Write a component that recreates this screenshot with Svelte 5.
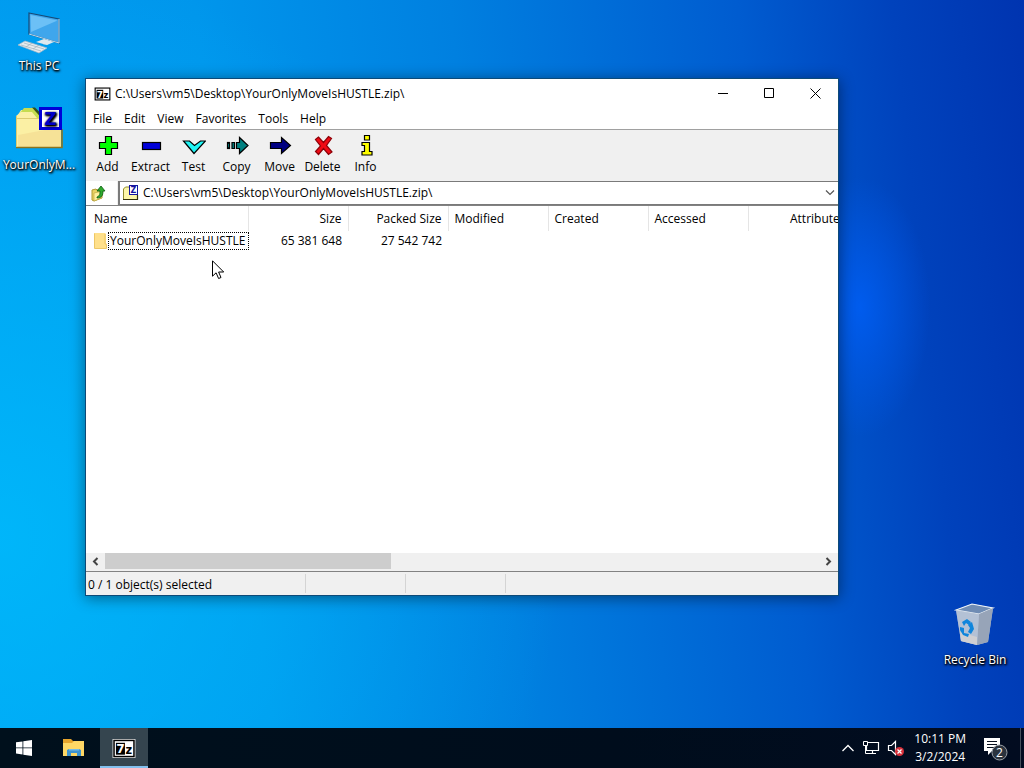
<script lang="ts">
  const path = "C:\\Users\\vm5\\Desktop\\YourOnlyMoveIsHUSTLE.zip\\"
  const menus = ["File", "Edit", "View", "Favorites", "Tools", "Help"]
  const tools = ["Add", "Extract", "Test", "Copy", "Move", "Delete", "Info"]
  const columns = [
    { name: "Name" },
    { name: "Size", number: true },
    { name: "Packed Size", number: true },
    { name: "Modified" },
    { name: "Created" },
    { name: "Accessed" },
    { name: "Attributes", number: true },
  ]
  const files = [
    { name: "YourOnlyMoveIsHUSTLE", size: "65 381 648", packed: "27 542 742" },
  ]

  let address = path
</script>

{#snippet sevenZip(width, height)}
  <svg {width} {height} viewBox="0 0 24 20" aria-hidden="true">
    <rect width="24" height="20" fill="#fff" />
    <rect x="1.5" y="1.5" width="21" height="17" fill="#fff" stroke="#000" stroke-width="1.6" />
    <rect x="3.5" y="4" width="9.5" height="12.5" fill="#000" />
    <text x="8.3" y="15" class="logo-text" font-size="13" fill="#fff">7</text>
    <text x="17" y="16" class="logo-text" font-size="12">z</text>
  </svg>
{/snippet}

{#snippet toolIcon(name)}
  <svg width="24" height="24" viewBox="0 0 24 24" stroke="#000" stroke-width="1.2" aria-hidden="true">
    {#if name === "Add"}
      <path d="M9.5 2.5h6v6h6v6h-6v6h-6v-6h-6v-6h6z" fill="#0f0" />
    {:else if name === "Extract"}
      <rect x="3.5" y="8.5" width="18" height="7" fill="#0000d8" />
    {:else if name === "Test"}
      <path d="M1.5 7h6l5 4.500 6-4.500h5L12 19.500z" fill="#20f4f4" />
    {:else if name === "Copy"}
      <rect x="2.5" y="8.5" width="2" height="6" fill="#008080" />
      <path d="M7 8.5h2.500v6H7zM11.500 8.500h3V3.500L23 11.500l-8.500 8v-5h-3z" fill="#008080" />
    {:else if name === "Move"}
      <path d="M2.500 8.500h11v-5l9 8-9 8v-5h-11z" fill="#000080" />
    {:else if name === "Delete"}
      <path d="M4.500 5.500l3-2.500 5 5.500 5-6 3 2-5 7 5.500 6.500-3.500 2.500-5-6-5 6-3-3 5-5.500z" fill="#f00a14" stroke="#8c0008" />
    {:else}
      <path d="M10.500 1.500h5v4.500h-5zM8 8.500h7.500v9H18v3.500H8V17.500h2.500v-6H8z" fill="#ff0" />
    {/if}
  </svg>
{/snippet}

<div class="screen">
  <main class="desktop">
    <button type="button" class="shortcut shortcut--pc">
      <svg width="44" height="44" viewBox="0 0 44 44" aria-hidden="true">
        <path d="M12 3l30 6v24L12 24z" fill="#3fa6ec" stroke="#164a78" stroke-width="1.200" />
        <path d="M13.500 5l27 5.500L14 22z" fill="#6cc0f6" />
        <path d="M42 9v24L12 24" fill="none" stroke="#bcdcf0" />
        <path d="M27 29.500l4 1v4h-5z" fill="#9eb3c2" />
        <path d="M19 32l8-3 10 3-7 3z" fill="#dfe8ee" />
        <path d="M1 35l7-4 22 7-8 5z" fill="#e6ebee" stroke="#a9b9c5" stroke-width=".7" />
        <path d="M4 35l20 6M7 33l20 6M9 37l6-4M16 39l6-4" stroke="#9eb0bc" stroke-width=".7" />
      </svg>
      <span>This PC</span>
    </button>
    <button type="button" class="shortcut shortcut--zip">
      <svg width="48" height="48" viewBox="0 0 48 48" aria-hidden="true">
        <path d="M1 13l5-8h14l6 7z" fill="#f6ee9a" />
        <path d="M5 8l4-5h9l6 5 4 5h-8l-4-6H8z" fill="#c6dc50" />
        <path d="M17 2.500h3l6 6v4z" fill="#35501c" />
        <path d="M1 11l5-4h11l5 6h24v29H1z" fill="#fbf0a4" />
        <path d="M3 30l43-8v20H3z" fill="#f3dc92" opacity=".7" />
        <path d="M1 42.500h46V24" fill="none" stroke="#8a7420" stroke-width="1.600" />
        <path d="M1.500 42V11M2 13.500h22" fill="none" stroke="#dccb70" />
        <rect x="25.500" y="3.500" width="20" height="20" fill="#fff" stroke="#0000d8" stroke-width="3" />
        <text x="35.500" y="19.500" class="logo-text" font-size="17" fill="#0000c8">Z</text>
      </svg>
      <span>YourOnlyM...</span>
    </button>
    <button type="button" class="shortcut shortcut--bin">
      <svg width="48" height="48" viewBox="0 0 48 48" aria-hidden="true">
        <path d="M5 10l16-6 21 4-5 34-11 3-16-4z" fill="#b9c6d8" opacity=".9" />
        <path d="M5 10l16-6 21 4-14 6z" fill="#6f8cb4" stroke="#edf3f8" stroke-width="1.200" />
        <path d="M28 14l14-6-5 34-11 3z" fill="#97a4b8" />
        <path d="M5 10l23 4-2 31-16-4z" fill="#b7c3d4" opacity=".8" />
        <path d="M9 32l17 5v8l-16-4z" fill="#cfcfd2" />
        <path d="M11 22l5-3 4 3-2 3-3-2-2 3zM21 22l2 7-3 5-3-2 2-4-2-3zM9 27l4 1v5l5 1-1 3-5-2-3-5z" fill="#0f85dc" />
      </svg>
      <span>Recycle Bin</span>
    </button>

    <section class="window" aria-label="7-Zip">
      <header class="titlebar">
        {@render sevenZip(17, 14)}
        <h1>{path}</h1>
        <button type="button" class="caption" aria-label="Minimize">
          <svg width="11" height="11" stroke="#000"><path d="M0 5.500h10" /></svg>
        </button>
        <button type="button" class="caption" aria-label="Maximize">
          <svg width="11" height="11" stroke="#000" fill="none"><path d="M.5.5h9v9h-9z" /></svg>
        </button>
        <button type="button" class="caption" aria-label="Close">
          <svg width="11" height="11" stroke="#000"><path d="M.5.5l10 10M10.500.5l-10 10" /></svg>
        </button>
      </header>

      <nav class="menubar">
        {#each menus as menu}
          <button type="button">{menu}</button>
        {/each}
      </nav>

      <div class="toolbar">
        {#each tools as tool}
          <button type="button" class="tool">
            {@render toolIcon(tool)}
            <span>{tool}</span>
          </button>
        {/each}
      </div>

      <div class="addressbar">
        <button type="button" class="up" aria-label="Up One Level">
          <svg width="15" height="17" viewBox="0 0 15 17">
            <path d="M1 5l4-1 1 1 5-1v9l-8 3-2-1z" fill="#e9d264" stroke="#b09a32" />
            <path d="M3 8l9-2-2 7-7 3z" fill="#fff0a0" stroke="#c0aa40" stroke-width=".7" />
            <path d="M6 12c3-1 3-3 3-6H6l4-5 4 5h-2c0 4-1 7-6 7z" fill="#2faa2f" stroke="#0b5c10" stroke-width=".8" />
          </svg>
        </button>
        <div class="combo">
          <svg width="17" height="17" viewBox="0 0 17 17" aria-hidden="true">
            <path d="M1 4l2-2h4l2 2h7v10H1z" fill="#fdf6a8" />
            <path d="M1.500 14V4l2-2H7" fill="none" stroke="#8f8a30" />
            <path d="M1 14.500h14.500V10" fill="none" stroke="#33300a" stroke-width="1.200" />
            <rect x="7.500" y=".500" width="8" height="9" fill="#fff" stroke="#1414a0" />
            <text x="11.500" y="8" class="logo-text" font-size="8" fill="#1414a0">Z</text>
          </svg>
          <input type="text" aria-label="Address" bind:value={address} />
          <button type="button" aria-label="Show addresses">
            <svg width="10" height="6" fill="none" stroke="#555" stroke-width="1.200"><path d="M1 .5l4 4 4-4" /></svg>
          </button>
        </div>
      </div>

      <div class="list">
        <table>
          <thead>
            <tr>
              {#each columns as column}
                <th scope="col" class:number={column.number}>{column.name}</th>
              {/each}
            </tr>
          </thead>
          <tbody>
            {#each files as file}
              <tr>
                <td>
                  <div class="file">
                    <svg width="14" height="16" viewBox="0 0 14 16" aria-hidden="true">
                      <path d="M0 0h11l1 1v9l1 1v4H0z" fill="#ffe08a" />
                      <path d="M.5.5v15h12v-4l-1.500-.5V1" fill="none" stroke="#edc766" />
                    </svg>
                    <span>{file.name}</span>
                  </div>
                </td>
                <td class="number">{file.size}</td>
                <td class="number">{file.packed}</td>
                <td></td>
                <td></td>
                <td></td>
                <td></td>
              </tr>
            {/each}
          </tbody>
        </table>
      </div>

      <div class="scrollbar">
        <button type="button" aria-label="Scroll left">
          <svg width="7" height="9" fill="none" stroke="#444" stroke-width="2"><path d="M5.500 1L2 4.500 5.500 8" /></svg>
        </button>
        <div class="track"><div class="thumb"></div></div>
        <button type="button" aria-label="Scroll right">
          <svg width="7" height="9" fill="none" stroke="#444" stroke-width="2"><path d="M1.500 1L5 4.500 1.500 8" /></svg>
        </button>
      </div>

      <footer class="status">
        <span class="status__main">0 / 1 object(s) selected</span>
        <span></span>
        <span></span>
      </footer>
    </section>

    <svg class="cursor" width="13" height="20" viewBox="0 0 13 20" aria-hidden="true">
      <path d="M.5.8v15.400l3.600-3.400 2.500 5.700 2.400-1L6.600 12h5.100z" fill="#fff" stroke="#000" />
    </svg>
  </main>

  <footer class="taskbar">
    <button type="button" class="task" aria-label="Start">
      <svg width="16" height="16" viewBox="0 0 16 16" fill="#fff">
        <path d="M0 2.300L6.500 1.400v6.100H0zM7.300 1.300L16 0v7.500H7.300zM0 8.300h6.500v6.200L0 13.600zM7.300 8.300H16V16l-8.700-1.300z" />
      </svg>
    </button>
    <button type="button" class="task" aria-label="File Explorer">
      <svg width="22" height="18" viewBox="0 0 22 18">
        <path d="M0 0h8l2 2h11v15H0z" fill="#e7a52c" />
        <path d="M0 4h9l2-2h10v15H0z" fill="#ffd865" />
        <path d="M4 17v-6l2-1h10l2 1v6h-4v-3H8v3z" fill="#3e94d0" />
        <path d="M6 10h10v1.500H6z" fill="#76bce6" />
      </svg>
    </button>
    <button type="button" class="task task--active" aria-label="7-Zip">
      {@render sevenZip(24, 19)}
    </button>

    <div class="tray">
      <button type="button" aria-label="Show hidden icons">
        <svg width="14" height="16" fill="none" stroke="#fff" stroke-width="1.300"><path d="M1.500 11L7 5.500l5.500 5.500" /></svg>
      </button>
      <button type="button" aria-label="Network">
        <svg width="18" height="16" fill="none" stroke="#fff">
          <path d="M5.500 2.500h11v8h-12V6M10.500 10.500v3M6 13.500h8" stroke-width="1.200" />
          <path d="M1.500 1.500h4v4h-4zM3.500 5.500v8h3" />
        </svg>
      </button>
      <button type="button" aria-label="Volume">
        <svg width="18" height="18" fill="none">
          <path d="M1.500 6.500h3l4-4v13l-4-4h-3z" stroke="#fff" stroke-width="1.200" />
          <circle cx="12.500" cy="12.500" r="4.500" fill="#d8313b" />
          <path d="M10.500 10.500l4 4M14.500 10.500l-4 4" stroke="#fff" stroke-width="1.200" />
        </svg>
      </button>
      <button type="button" class="clock">
        <time>10:11 PM</time>
        <time>3/2/2024</time>
      </button>
      <button type="button" class="notices" aria-label="2 new notifications">
        <svg width="26" height="26" viewBox="0 0 26 26">
          <path d="M1 3h16v13H9l-4 4v-4H1z" fill="#fff" />
          <path d="M4 6.500h10M4 9.500h10M4 12.500h7" stroke="#08111f" />
          <circle cx="16.500" cy="17.500" r="7.500" fill="#2b333e" stroke="#9a9fa6" />
          <text x="16.500" y="22" font-size="12" fill="#fff" text-anchor="middle">2</text>
        </svg>
      </button>
      <button type="button" class="peek" aria-label="Show desktop"></button>
    </div>
  </footer>
</div>

<style>
  :global(body) {
    margin: 0;
  }

  .screen {
    display: flex;
    flex-direction: column;
    height: 100vh;
    overflow: hidden;
    font: 12px/16px "Open Sans", "Noto Sans", sans-serif;
    color: #000;
    background:
      radial-gradient(ellipse 70px 130px at 84% 40%, rgba(0, 98, 255, 0.7), transparent),
      radial-gradient(ellipse 55% 75% at 0% 70%, rgba(0, 196, 255, 0.65), transparent),
      linear-gradient(84deg, #009cf0 0%, #0096ec 25%, #0080e0 48%, #005cd0 74%, #0042bc 88%, #0034b0 100%);
  }

  button,
  input {
    margin: 0;
    padding: 0;
    border: 0;
    background: none;
    font: inherit;
    color: inherit;
  }

  svg {
    display: block;
    flex: none;
  }

  .logo-text {
    font-family: "DejaVu Sans", sans-serif;
    font-weight: bold;
    text-anchor: middle;
  }

  .desktop {
    position: relative;
    flex: 1;
  }

  /* desktop icons sit freely on the canvas */
  .shortcut {
    position: absolute;
    display: flex;
    flex-direction: column;
    align-items: center;
    gap: 4px;
    width: 76px;
    color: #fff;
    text-shadow: 0 1px 2px #000, 1px 1px 2px #000, 1px 1px 3px #000;
    white-space: nowrap;
  }

  .shortcut--pc {
    left: 1px;
    top: 10px;
  }

  .shortcut--zip {
    left: 1px;
    top: 105px;
  }

  .shortcut--bin {
    right: 11px;
    bottom: 60px;
  }

  .window {
    position: absolute;
    inset: 78px 185px 132px 85px;
    display: flex;
    flex-direction: column;
    box-sizing: border-box;
    border: 1px solid #0d4a78;
    background: #fff;
    box-shadow: 0 2px 14px rgba(0, 0, 0, 0.45);
  }

  .titlebar {
    display: flex;
    align-items: center;
    height: 29px;
    padding-left: 8px;
  }

  .titlebar h1 {
    flex: 1;
    margin: 0 0 0 4px;
    font-size: 12px;
    font-weight: normal;
  }

  .caption {
    display: flex;
    align-items: center;
    justify-content: center;
    width: 46px;
    height: 100%;
  }

  .menubar {
    display: flex;
    height: 21px;
    padding-left: 1px;
    border-bottom: 1px solid #a0a0a0;
  }

  .menubar button {
    padding: 0 6px;
  }

  .toolbar {
    display: flex;
    height: 51px;
    background: #f0f0f0;
  }

  .tool {
    display: flex;
    flex-direction: column;
    align-items: center;
    gap: 1px;
    width: 43px;
    padding-top: 4px;
  }

  .addressbar {
    display: flex;
    height: 24px;
    border-bottom: 1px solid #828282;
    background: #f0f0f0;
  }

  .up {
    display: flex;
    align-items: center;
    width: 31px;
    margin-right: 1px;
    padding-left: 5px;
    background: #fff;
  }

  .combo {
    display: flex;
    flex: 1;
    align-items: center;
    padding: 0 3px 0 2px;
    border: solid #7a7a7a;
    border-width: 1px 0 1px 2px;
    background: #fff;
  }

  .combo input {
    flex: 1;
    min-width: 0;
    padding-left: 4px;
    outline: none;
  }

  .list {
    flex: 1;
    overflow: hidden;
  }

  table {
    width: 762px;
    border-collapse: collapse;
    table-layout: fixed;
  }

  th,
  td {
    box-sizing: border-box;
    width: 100px;
    height: 25px;
    padding: 0 6px;
    font-weight: normal;
    text-align: left;
    white-space: nowrap;
  }

  th {
    border-right: 1px solid #e5e5e5;
  }

  th:first-child,
  td:first-child {
    width: 162px;
    padding-left: 8px;
  }

  th:last-child {
    padding-right: 2px;
  }

  td {
    height: 19px;
  }

  .number {
    text-align: right;
  }

  .file {
    display: flex;
    align-items: center;
  }

  .file span {
    padding: 0 3px 0 1px;
    border: 1px dotted #000;
  }

  .scrollbar {
    display: flex;
    height: 16px;
    padding-bottom: 2px;
    border-bottom: 1px solid #828282;
    background: #f0f0f0;
  }

  .scrollbar button {
    display: flex;
    align-items: center;
    justify-content: center;
    width: 19px;
  }

  .track {
    flex: 1;
  }

  .thumb {
    width: 40%;
    height: 100%;
    background: #cdcdcd;
  }

  .status {
    display: flex;
    height: 23px;
    background: #f0f0f0;
  }

  .status span {
    box-sizing: border-box;
    width: 100px;
    margin: 2px 0;
    border-right: 1px solid #d4d4d4;
  }

  .status .status__main {
    width: 220px;
    padding-left: 2px;
    line-height: 21px;
  }

  .cursor {
    position: absolute;
    left: 212px;
    top: 260px;
  }

  .taskbar {
    display: flex;
    height: 40px;
    background: linear-gradient(90deg, #00101c, #000d1c 60%, #020c20);
    color: #fff;
  }

  .task {
    display: flex;
    align-items: center;
    justify-content: center;
    width: 48px;
    margin-right: 2px;
  }

  .task--active {
    box-sizing: border-box;
    border-top: 2px solid #35454f;
    border-bottom: 2px solid #83c0ee;
    background: #35454f;
  }

  .tray {
    display: flex;
    align-items: center;
    gap: 7px;
    margin-left: auto;
  }

  .clock {
    display: flex;
    flex-direction: column;
    gap: 2px;
    margin-left: 2px;
    text-align: center;
  }

  .notices {
    margin: 0 5px 0 10px;
  }

  .peek {
    align-self: stretch;
    width: 4px;
    margin-left: -1px;
    border-left: 1px solid #46505c;
  }
</style>
